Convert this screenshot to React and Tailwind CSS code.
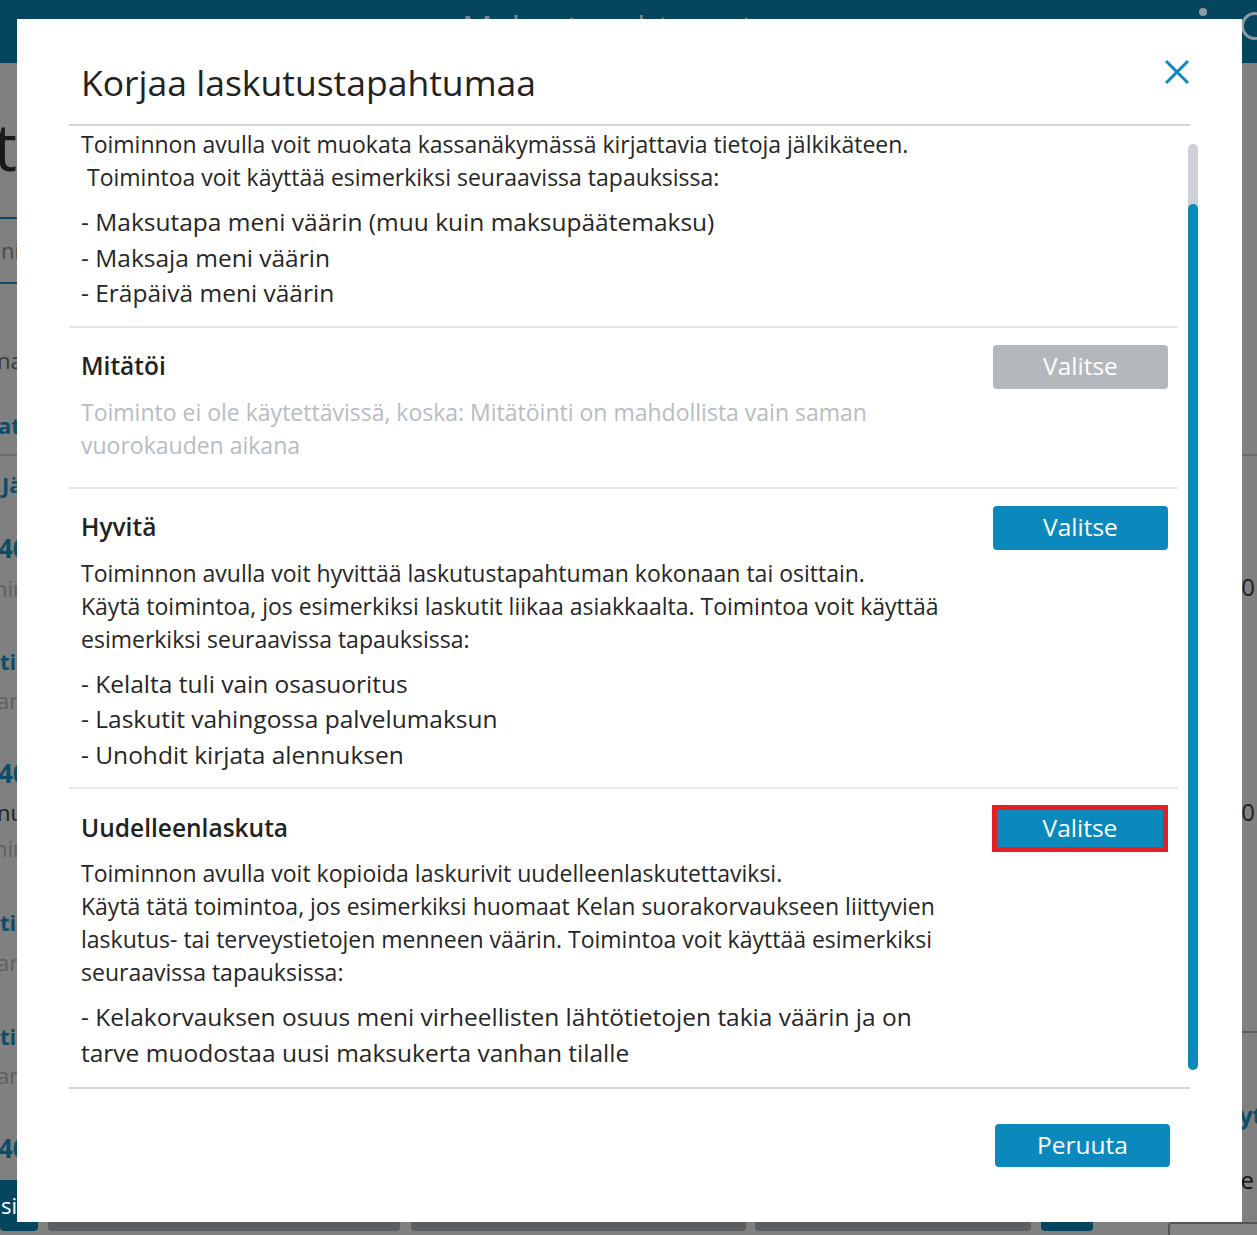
function XIcon() {
  return (
    <svg width="26" height="26" viewBox="0 0 26 26" fill="none">
      <path d="M2 2 L24 24 M24 2 L2 24" stroke="#0b89bd" strokeWidth="3" strokeLinecap="butt" />
    </svg>
  );
}

function SideText({ h, className, children }) {
  return (
    <div className={`w-[17px] overflow-hidden whitespace-nowrap flex justify-start ${h} ${className}`}>
      {children}
    </div>
  );
}

function RightText({ h, className, children }) {
  return (
    <div className={`w-full overflow-hidden whitespace-nowrap flex justify-end pr-[2px] ${h} ${className}`}>
      <span>{children}</span>
    </div>
  );
}

function Section({ title, button, children, last }) {
  return (
    <div className={`pt-[17px] pl-[12px] pr-[10px] pb-[15px] ${last ? "" : "border-b-2 border-[#e4e7ea]"}`}>
      <div className="flex h-[44px] items-center justify-between">
        <h3 className="mt-[-2px] text-[24.5px] font-semibold leading-[33px] text-[#222]">{title}</h3>
        {button}
      </div>
      <div className="mt-[7px] max-w-[875px]">{children}</div>
    </div>
  );
}

export default function App() {
  return (
    <div className="relative h-[1235px] w-[1257px] overflow-hidden bg-[#808080] font-['Open_Sans',sans-serif]">
      {/* background page (dimmed) */}
      <header className="flex h-[63px] items-start bg-[#06455e]">
        <div className="ml-[462px] pt-[6px] text-[34px] leading-[44px] text-[#7d868b]">Maksutapahtumat</div>
        <div className="ml-auto mt-[8px] h-[8px] w-[8px] rounded-full bg-[#8f9ba2]" />
        <div className="ml-[34px] mr-[-12px] mt-[12px] h-[28px] w-[28px] rounded-full border-[3px] border-[#8f9ba2]" />
      </header>
      <div className="flex h-[1172px]">
        <div className="flex w-[38px] flex-col text-[22px]">
          <div className="h-[37px]" />
          <div className="flex h-[90px] w-[17px] justify-end overflow-hidden whitespace-nowrap text-[66px] leading-[90px] text-[#1a1a1a]">
            <span>Maksutapahtumat</span>
          </div>
          <div className="h-[27px]" />
          <SideText h="h-[67px] items-center border-y-2 border-[#0c4a63]" className="text-[#4a4a4a]"><span className="ml-[1px]">nimi</span></SideText>
          <div className="h-[56px]" />
          <SideText h="h-[40px] leading-[40px]" className="text-[#3a3a3a]"><span className="ml-[-3px]">na</span></SideText>
          <div className="h-[25px]" />
          <SideText h="h-[40px] leading-[40px]" className="font-bold text-[#0c4d69]"><span className="ml-[-2px]">at</span></SideText>
          <div className="h-[9px]" />
          <div className="h-[2px] w-[17px] bg-[#6b6b6b]" />
          <div className="h-[8px]" />
          <SideText h="h-[40px] leading-[40px]" className="font-bold text-[#0c4d69]"><span className="ml-[2px]">Jäsen</span></SideText>
          <div className="h-[24px]" />
          <SideText h="h-[40px] leading-[40px]" className="text-[26px] font-bold text-[#0c4d69]"><span className="ml-[-2px]">40</span></SideText>
          <SideText h="h-[40px] leading-[40px]" className="text-[#5f5f5f]"><span className="ml-[-6px]">hin</span></SideText>
          <div className="h-[33px]" />
          <SideText h="h-[40px] leading-[40px]" className="font-bold text-[#0c4d69]"><span className="ml-[0px]">tili</span></SideText>
          <SideText h="h-[38px] leading-[38px]" className="text-[#5f5f5f]"><span className="ml-[-3px]">arv</span></SideText>
          <div className="h-[34px]" />
          <SideText h="h-[40px] leading-[40px]" className="text-[26px] font-bold text-[#0c4d69]"><span className="ml-[-2px]">40</span></SideText>
          <SideText h="h-[38px] leading-[38px]" className="text-[#1f1f1f]"><span className="ml-[-3px]">nu</span></SideText>
          <SideText h="h-[34px] leading-[34px]" className="text-[#5f5f5f]"><span className="ml-[-6px]">hin</span></SideText>
          <div className="h-[37px]" />
          <SideText h="h-[40px] leading-[40px]" className="font-bold text-[#0c4d69]"><span className="ml-[0px]">tili</span></SideText>
          <SideText h="h-[40px] leading-[40px]" className="text-[#5f5f5f]"><span className="ml-[-3px]">arv</span></SideText>
          <div className="h-[34px]" />
          <SideText h="h-[40px] leading-[40px]" className="font-bold text-[#0c4d69]"><span className="ml-[0px]">tili</span></SideText>
          <SideText h="h-[38px] leading-[38px]" className="text-[#5f5f5f]"><span className="ml-[-3px]">arv</span></SideText>
          <div className="h-[34px]" />
          <SideText h="h-[40px] leading-[40px]" className="text-[26px] font-bold text-[#0c4d69]"><span className="ml-[-2px]">40</span></SideText>
          <div className="h-[12px]" />
          <div className="flex h-[51px] w-[38px] items-center justify-end overflow-hidden whitespace-nowrap rounded-b-[4px] bg-[#06455e] pr-[21px] text-[22px] text-white">
            <span>si</span>
          </div>
        </div>
        <div className="flex flex-1 flex-col">
          <div className="mt-auto mb-[4px] ml-[10px] flex h-[9px] items-stretch">
            <div className="w-[352px] rounded-b-[4px] bg-[#5c5f62]" />
            <div className="ml-[11px] w-[335px] rounded-b-[4px] bg-[#5c5f62]" />
            <div className="ml-[9px] w-[276px] rounded-b-[4px] bg-[#5c5f62]" />
            <div className="ml-[10px] w-[52px] rounded-b-[4px] bg-[#06455e]" />
          </div>
        </div>
        <div className="flex w-[89px] flex-col text-[24px]">
          <div className="h-[391px]" />
          <div className="h-[2px] w-full bg-[#6b6b6b]" />
          <div className="h-[111px]" />
          <RightText h="h-[40px] leading-[40px]" className="text-[#1f1f1f]">0</RightText>
          <div className="h-[185px]" />
          <RightText h="h-[40px] leading-[40px]" className="text-[#1f1f1f]">0</RightText>
          <div className="h-[199px]" />
          <div className="h-[2px] w-full bg-[#5f5f5f]" />
          <div className="h-[62px]" />
          <RightText h="h-[40px] leading-[40px]" className="font-bold text-[#0c4d69]"><span className="mr-[-8px] inline-block">yt</span></RightText>
          <div className="h-[25px]" />
          <RightText h="h-[40px] leading-[40px]" className="text-[#111]"><span className="mr-[1px] inline-block">e</span></RightText>
          <div className="h-[22px]" />
          <div className="h-[13px] rounded-tl-[4px] border-l-2 border-t-2 border-[#555] bg-[#858585]" />
        </div>
      </div>

      {/* modal */}
      <div className="absolute left-[17px] top-[19px] flex h-[1203px] w-[1225px] flex-col bg-white text-[#262626]">
        <div className="mx-[52px] flex items-start justify-between border-b-2 border-[#d1d5d9] pb-[17px] pl-[12px] pt-[40px]">
          <h2 className="mt-[-1px] mb-[1px] text-[35.5px] leading-[48px] text-[#222]">Korjaa laskutustapahtumaa</h2>
          <button className="h-[26px] w-[26px]" aria-label="Sulje"><XIcon /></button>
        </div>

        <div className="ml-[52px] mr-[44px] flex h-[961px]">
          <div className="flex-1 overflow-hidden pr-[10px] text-[23px]">
            <div className="border-b-2 border-[#e4e7ea] pb-[15px] pl-[12px] pr-[10px] pt-[2px]">
              <p className="mb-[10px] leading-[33px]">
                Toiminnon avulla voit muokata kassanäkymässä kirjattavia tietoja jälkikäteen.
                <br />
                {"\u00a0"}Toimintoa voit käyttää esimerkiksi seuraavissa tapauksissa:
              </p>
              <ul className="text-[24.5px] leading-[35.5px]">
                <li>- Maksutapa meni väärin (muu kuin maksupäätemaksu)</li>
                <li>- Maksaja meni väärin</li>
                <li>- Eräpäivä meni väärin</li>
              </ul>
            </div>

            <Section
              title="Mitätöi"
              button={<button className="h-[44px] w-[175px] rounded-[4px] bg-[#b4b8bc] text-[24.5px] text-white">Valitse</button>}
            >
              <p className="mb-[10px] leading-[33px] text-[#b7bcc1]">
                Toiminto ei ole käytettävissä, koska: Mitätöinti on mahdollista vain saman vuorokauden aikana
              </p>
            </Section>

            <Section
              title="Hyvitä"
              button={<button className="h-[44px] w-[175px] rounded-[4px] bg-[#0b89bd] text-[24.5px] text-white">Valitse</button>}
            >
              <p className="mb-[10px] leading-[33px]">
                Toiminnon avulla voit hyvittää laskutustapahtuman kokonaan tai osittain.
                <br />
                Käytä toimintoa, jos esimerkiksi laskutit liikaa asiakkaalta. Toimintoa voit käyttää esimerkiksi seuraavissa tapauksissa:
              </p>
              <ul className="text-[24.5px] leading-[35.5px]">
                <li>- Kelalta tuli vain osasuoritus</li>
                <li>- Laskutit vahingossa palvelumaksun</li>
                <li>- Unohdit kirjata alennuksen</li>
              </ul>
            </Section>

            <Section
              last
              title="Uudelleenlaskuta"
              button={<button className="h-[47px] w-[176px] border-[5px] border-[#e31e25] bg-[#0b89bd] text-[24.5px] text-white">Valitse</button>}
            >
              <p className="mb-[10px] leading-[33px]">
                Toiminnon avulla voit kopioida laskurivit uudelleenlaskutettaviksi.
                <br />
                Käytä tätä toimintoa, jos esimerkiksi huomaat Kelan suorakorvaukseen liittyvien laskutus- tai terveystietojen menneen väärin. Toimintoa voit käyttää esimerkiksi seuraavissa tapauksissa:
              </p>
              <ul className="text-[24.5px] leading-[35.5px]">
                <li>- Kelakorvauksen osuus meni virheellisten lähtötietojen takia väärin ja on tarve muodostaa uusi maksukerta vanhan tilalle</li>
              </ul>
            </Section>
          </div>
          <div className="flex w-[10px] pb-[17px] pt-[18px]">
            <div className="flex w-full flex-col rounded-full bg-[#cdd1d5]">
              <div className="mt-[60px] flex-1 rounded-full bg-[#0b89bd]" />
            </div>
          </div>
        </div>

        <div className="mx-[52px] flex justify-end border-t-2 border-[#d1d5d9] pr-[20px] pt-[35px]">
          <button className="h-[43px] w-[175px] rounded-[4px] bg-[#0b89bd] text-[24.5px] text-white">Peruuta</button>
        </div>
      </div>
    </div>
  );
}
